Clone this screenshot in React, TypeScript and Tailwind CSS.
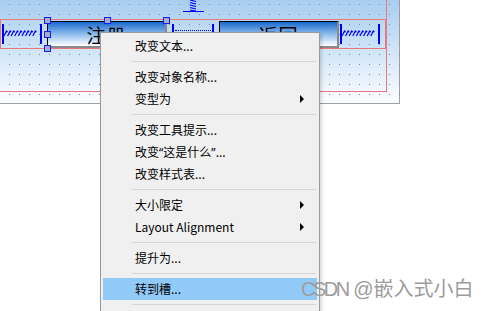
import React from "react";

function hCoil(x0: number, x1: number, yTop: number, yBot: number, p: number) {
  let d = "";
  for (let x = x0; x + p <= x1 + 0.01; x += p) {
    d += `M${x.toFixed(2)} ${yBot} L${(x + p * 0.7).toFixed(2)} ${yTop} L${(x + p).toFixed(2)} ${yTop + 1} `;
  }
  return d;
}

function HSpring({ width }: { width: number }) {
  return (
    <svg width={width} height={28} className="block" shapeRendering="crispEdges">
      <rect x={1} y={4} width={2} height={20} fill="#0000ff" />
      <rect x={width - 7} y={4} width={2} height={20} fill="#0000ff" />
      <path d={hCoil(3, width - 8, 11, 16, 3.6)} stroke="#0000ff" strokeWidth={1.2} fill="none" shapeRendering="auto" />
    </svg>
  );
}

function Handle({ x, y }: { x: number; y: number }) {
  return (
    <div
      className="absolute w-[7px] h-[7px] border border-[#1a1aff] bg-[#a3aec4]"
      style={{ left: x - 3, top: y - 3 }}
    />
  );
}

function Arrow() {
  return (
    <svg width="5" height="8" className="block">
      <path d="M0 0 L4 4 L0 8 Z" fill="#000" />
    </svg>
  );
}

type Item = { t: React.ReactNode; sep?: false; arrow?: boolean; hl?: boolean } | { sep: true };

const Q = ({ c }: { c: string }) => (
  <span className="font-['Noto_Sans',sans-serif]">{c}</span>
);

const items: Item[] = [
  { t: "改变文本..." },
  { sep: true },
  { t: "改变对象名称..." },
  { t: "变型为", arrow: true },
  { sep: true },
  { t: "改变工具提示..." },
  {
    t: (
      <>
        改变<Q c="“" />这是什么<Q c="”" />...
      </>
    ),
  },
  { t: "改变样式表..." },
  { sep: true },
  { t: "大小限定", arrow: true },
  { t: "Layout Alignment", arrow: true },
  { sep: true },
  { t: "提升为..." },
  { sep: true },
  { t: "转到槽...", hl: true },
  { sep: true },
];

function DotGrid() {
  return (
    <svg className="absolute inset-0" width="400" height="104">
      <defs>
        <pattern id="dots" x="9" y="4" width="10" height="10" patternUnits="userSpaceOnUse">
          <rect x="0" y="0" width="1" height="1" fill="#7d8a99" />
        </pattern>
      </defs>
      <rect x="0" y="0" width="400" height="104" fill="url(#dots)" />
    </svg>
  );
}

function Button({ label }: { label: string }) {
  return (
    <div className="w-[120px] h-[27px] mt-[1px] border-t border-l border-black border-r-2 border-b-2 border-r-[#8a8a8a] border-b-[#8a8a8a] bg-gradient-to-b from-[#1467cc] via-[#8cbcec] to-white flex items-center justify-center">
      <span className="text-[19px] leading-none text-black font-['Noto_Sans_CJK_SC',sans-serif] tracking-[1px]">
        {label}
      </span>
    </div>
  );
}

export default function App() {
  return (
    <div className="relative w-[485px] h-[311px] bg-white overflow-hidden font-['Noto_Sans','Noto_Sans_CJK_SC',sans-serif]">
      {/* designer canvas */}
      <div className="relative w-[400px] h-[104px] border-r border-b border-[#a0a0a0] bg-gradient-to-b from-[#a7cef0] to-[#fbfdff]">
        <DotGrid />
        <div className="relative w-[387px] h-[92px] border-r border-b border-[#ec767e] flex flex-col">
          <div className="h-[19px] flex justify-start pl-[183px]">
            <svg width="21" height="13" className="block">
              <path
                d="M190 0 L196 1.5 M190 2.5 L196 4 M190 5 L196 6.5 M190 7.5 L196 9 M190 10 L196 11"
                transform="translate(-183 0)"
                stroke="#0000ff"
                strokeWidth="1.1"
                fill="none"
              />
              <rect x="0" y="11" width="21" height="1" fill="#0000ff" />
            </svg>
          </div>
          <div className="w-[386px] h-[30px] border border-[#ec767e] flex items-start">
            <div className="w-[46px] flex">
              <HSpring width={46} />
            </div>
            <Button label="注册" />
            <div className="w-[52px] h-[28px] relative">
              <div className="absolute left-[5px] top-[4px] w-[2px] h-[20px] bg-[#0000ff]" />
              <div className="absolute left-[45px] top-[4px] w-[2px] h-[20px] bg-[#0000ff]" />
              <div className="absolute left-[8px] top-[10px] w-[36px] border-t border-dotted border-[#0000ff]" />
            </div>
            <Button label="返回" />
            <div className="w-[46px] flex">
              <HSpring width={46} />
            </div>
          </div>
        </div>
        <Handle x={47} y={20} />
        <Handle x={107} y={20} />
        <Handle x={166} y={20} />
        <Handle x={47} y={34} />
        <Handle x={47} y={48} />
      </div>

      {/* context menu */}
      <div className="absolute left-[100px] top-[32px] w-[220px] h-[290px] bg-[#f0f0f0] border border-[#9a9a9a] shadow-[2px_2px_3px_rgba(0,0,0,0.15)] pt-[2px] px-[2px] text-[12px] text-black">
        {items.map((it, i) =>
          it.sep ? (
            <div key={i} className="h-[9px] flex items-center pl-[29px] pr-[1px]">
              <div className="h-px w-full bg-[#d5d5d5]" />
            </div>
          ) : (
            <div
              key={i}
              className={
                "h-[22px] flex items-center pl-[32px] pr-[12px] " + (it.hl ? "bg-[#91c9f7]" : "")
              }
            >
              <span className="flex-1 leading-none font-['Noto_Sans_CJK_SC',sans-serif]">{it.t}</span>
              {it.arrow ? <Arrow /> : null}
            </div>
          )
        )}
      </div>

      {/* watermark */}
      <div className="absolute left-[301px] top-[279px] text-[20px] leading-none text-[#9c9c9c] font-['Liberation_Sans','Noto_Sans_CJK_SC',sans-serif] whitespace-nowrap">
        <span className="tracking-[-2.5px]">CSDN</span> @嵌入式小白
      </div>
    </div>
  );
}
